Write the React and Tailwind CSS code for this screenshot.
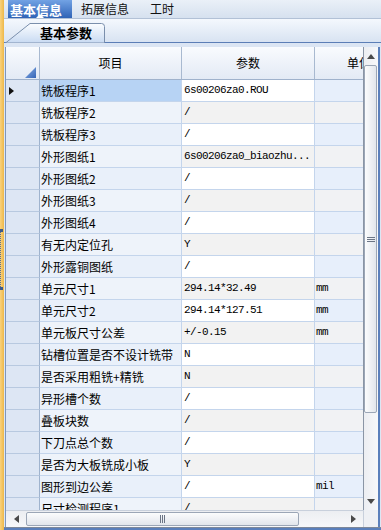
import React from "react";

const rows = [
  ["铣板程序1", "6s00206za0.ROU", ""],
  ["铣板程序2", "/", ""],
  ["铣板程序3", "/", ""],
  ["外形图纸1", "6s00206za0_biaozhu...", ""],
  ["外形图纸2", "/", ""],
  ["外形图纸3", "/", ""],
  ["外形图纸4", "/", ""],
  ["有无内定位孔", "Y", ""],
  ["外形露铜图纸", "/", ""],
  ["单元尺寸1", "294.14*32.49", "mm"],
  ["单元尺寸2", "294.14*127.51", "mm"],
  ["单元板尺寸公差", "+/-0.15", "mm"],
  ["钻槽位置是否不设计铣带", "N", ""],
  ["是否采用粗铣+精铣", "N", ""],
  ["异形槽个数", "/", ""],
  ["叠板块数", "/", ""],
  ["下刀点总个数", "/", ""],
  ["是否为大板铣成小板", "Y", ""],
  ["图形到边公差", "/", "mil"],
  ["尺寸检测程序1", "/", ""],
];

function LeftStrip() {
  return (
    <div className="flex flex-col w-[4px] h-full bg-linear-to-r from-[#f9d27c] to-[#eeb848]">
      <div className="h-[229px]" />
      <div className="h-[3px] w-[3px] bg-[#3d5a8a]" />
      <div className="h-[55px] w-[2px] border-l border-dotted border-[#5a6f90]" />
      <div className="h-[3px] w-[3px] bg-[#3d5a8a]" />
    </div>
  );
}

function TopTabs() {
  return (
    <div className="flex items-stretch h-[19px] border-b border-[#b2c1d6] bg-linear-to-b from-[#eaf0f8] to-[#d6e1ef] pl-[4px]">
      <div className="relative flex items-center w-[64px] pl-[2px] bg-linear-to-b from-[#72a2e4] to-[#2f63b6] text-white text-[13px] font-bold leading-none">
        基本信息
        <svg className="absolute left-[28px] bottom-0" width="8" height="4" viewBox="0 0 8 4">
          <polygon points="0,4 4,0 8,4" fill="#ffffff" />
        </svg>
      </div>
      <div className="flex items-center ml-[9px] text-[12px] text-[#111] leading-none">拓展信息</div>
      <div className="flex items-center ml-[21px] text-[12px] text-[#111] leading-none">工时</div>
    </div>
  );
}

function SubTabs() {
  return (
    <div className="relative h-[24px] border-b border-[#5b7eb6] bg-linear-to-b from-[#f4f8fd] to-[#d8e3f2]">
      <svg className="absolute left-[1px] top-[4px]" width="101" height="20" viewBox="0 0 101 20">
        <defs>
          <linearGradient id="tabg" x1="0" y1="0" x2="0" y2="1">
            <stop offset="0" stopColor="#fbfdff" />
            <stop offset="1" stopColor="#c8daf2" />
          </linearGradient>
        </defs>
        <path d="M0.5,20 L25,0.5 L96.5,0.5 Q99.5,0.5 99.5,3.5 L99.5,20 Z" fill="url(#tabg)" stroke="#7a8fac" strokeWidth="1" />
      </svg>
      <div className="relative flex items-center h-[19px] mt-[4px] ml-[36px] text-[13px] font-bold text-black leading-none">
        基本参数
      </div>
    </div>
  );
}

function HeaderRow() {
  return (
    <div className="flex h-[33px] border-b border-[#9fb2cc] bg-linear-to-b from-[#f9fbfe] to-[#e3eaf5] text-[12px] text-black">
      <div className="relative w-[34px] shrink-0 border-r border-[#a8b9d0]">
        <svg className="absolute right-[3px] bottom-[1px]" width="11" height="11" viewBox="0 0 11 11">
          <defs>
            <linearGradient id="cg" x1="0" y1="0" x2="1" y2="1">
              <stop offset="0" stopColor="#8db2e8" />
              <stop offset="1" stopColor="#3464b6" />
            </linearGradient>
          </defs>
          <polygon points="11,0 11,11 0,11" fill="url(#cg)" />
        </svg>
      </div>
      <div className="flex items-center justify-center w-[142px] shrink-0 border-r border-[#a8b9d0]">项目</div>
      <div className="flex items-center justify-center w-[133px] shrink-0 border-r border-[#a8b9d0]">参数</div>
      <div className="flex items-center justify-center w-[88px] shrink-0">单位</div>
    </div>
  );
}

function Row({ r, i }) {
  const odd = i % 2 === 1;
  const sel = i === 0;
  return (
    <div className="flex h-[22px]">
      <div className="flex items-center w-[34px] shrink-0 pl-[3px] border-r border-b border-r-[#9fb3ce] border-b-[#b8c9e0] bg-[#dde6f4]">
        {sel && (
          <svg width="5" height="8" viewBox="0 0 5 8">
            <polygon points="0,0 5,4 0,8" fill="#111" />
          </svg>
        )}
      </div>
      <div
        className={
          "flex items-center w-[142px] shrink-0 pl-[1px] border-r border-b border-[#c4d5ec] text-[12px] text-black whitespace-nowrap overflow-hidden " +
          (sel ? "bg-[#b7d3f4]" : odd ? "bg-[#eef3fa]" : "bg-[#e9f0fa]")
        }
      >
        {r[0]}
      </div>
      <div
        className={
          "flex items-center w-[133px] shrink-0 pl-[2px] border-r border-b border-[#c4d5ec] font-['Liberation_Mono',monospace] text-[11px] tracking-[-0.6px] text-black whitespace-nowrap overflow-hidden " +
          (odd ? "bg-[#f2f2f2]" : "bg-white")
        }
      >
        {r[1]}
      </div>
      <div
        className={
          "flex items-center w-[88px] shrink-0 pl-[1px] border-b border-[#c4d5ec] font-['Liberation_Mono',monospace] text-[11px] tracking-[-0.6px] text-black " +
          (odd ? "bg-[#f1f2f4]" : "bg-[#e7effb]")
        }
      >
        {r[2]}
      </div>
    </div>
  );
}

function VScroll() {
  return (
    <div className="flex flex-col h-[463px] border-l border-[#8a95a5] bg-linear-to-r from-[#eceef2] to-[#f7f8fa]">
      <div className="flex items-center justify-center h-[18px]">
        <svg width="8" height="5" viewBox="0 0 8 5">
          <polygon points="0,5 4,0 8,5" fill="#4a4a4a" />
        </svg>
      </div>
      <div className="flex items-center justify-center h-[348px] w-[13px] rounded-[2px] border border-[#9ba6b6] bg-linear-to-r from-[#fbfcfd] to-[#e2e6ec]">
        <div className="flex flex-col gap-[1px]">
          <div className="h-[1px] w-[8px] bg-[#6b7585]" />
          <div className="h-[1px] w-[8px] bg-[#6b7585]" />
          <div className="h-[1px] w-[8px] bg-[#6b7585]" />
        </div>
      </div>
      <div className="flex-1" />
      <div className="flex items-center justify-center h-[17px]">
        <svg width="8" height="5" viewBox="0 0 8 5">
          <polygon points="0,0 8,0 4,5" fill="#4a4a4a" />
        </svg>
      </div>
    </div>
  );
}

function HScroll() {
  return (
    <div className="flex items-center h-[17px] bg-linear-to-b from-[#eceef2] to-[#f7f8fa] border-t border-[#c8d0dc]">
      <div className="flex items-center justify-center w-[20px] h-full">
        <svg width="5" height="8" viewBox="0 0 5 8">
          <polygon points="5,0 0,4 5,8" fill="#4a4a4a" />
        </svg>
      </div>
      <div className="flex items-center justify-center w-[273px] h-[14px] rounded-[2px] border border-[#9ba6b6] bg-linear-to-b from-[#fbfcfd] to-[#e2e6ec]">
        <div className="flex gap-[1px]">
          <div className="w-[1px] h-[8px] bg-[#6b7585]" />
          <div className="w-[1px] h-[8px] bg-[#6b7585]" />
          <div className="w-[1px] h-[8px] bg-[#6b7585]" />
        </div>
      </div>
      <div className="flex-1" />
      <div className="flex items-center justify-center w-[20px] h-full">
        <svg width="5" height="8" viewBox="0 0 5 8">
          <polygon points="0,0 5,4 0,8" fill="#4a4a4a" />
        </svg>
      </div>
    </div>
  );
}

function Grid() {
  return (
    <div className="flex flex-col flex-1 min-h-0">
      <div className="flex flex-1 min-h-0">
        <div className="w-[1px] bg-[#dce6f3]" />
        <div className="w-[1px] bg-[#7f96b8]" />
        <div className="flex flex-col w-[357px]">
          <div className="h-[463px] overflow-hidden bg-white">
            <div className="w-[397px]">
              <HeaderRow />
              {rows.map((r, i) => (
                <Row key={i} r={r} i={i} />
              ))}
            </div>
          </div>
          <HScroll />
        </div>
        <div className="flex flex-col w-[15px]">
          <VScroll />
          <div className="h-[17px] border-l border-[#c8d0dc] bg-[#eef0f4]" />
        </div>
        <div className="w-[2px] bg-[#5a7fbb]" />
        <div className="w-[1px] bg-[#dce6f3]" />
      </div>
      <div className="h-[1px] bg-[#7d8899]" />
      <div className="h-[2px] bg-[#5a7fbb]" />
    </div>
  );
}

export default function App() {
  return (
    <div className="flex w-[381px] h-[530px] overflow-hidden bg-[#dfe7f3] font-['Noto_Sans_CJK_SC',sans-serif]">
      <LeftStrip />
      <div className="flex flex-col w-[377px] h-full">
        <TopTabs />
        <SubTabs />
        <div className="h-[4px] bg-[#dbe5f3]" />
        <Grid />
      </div>
    </div>
  );
}
